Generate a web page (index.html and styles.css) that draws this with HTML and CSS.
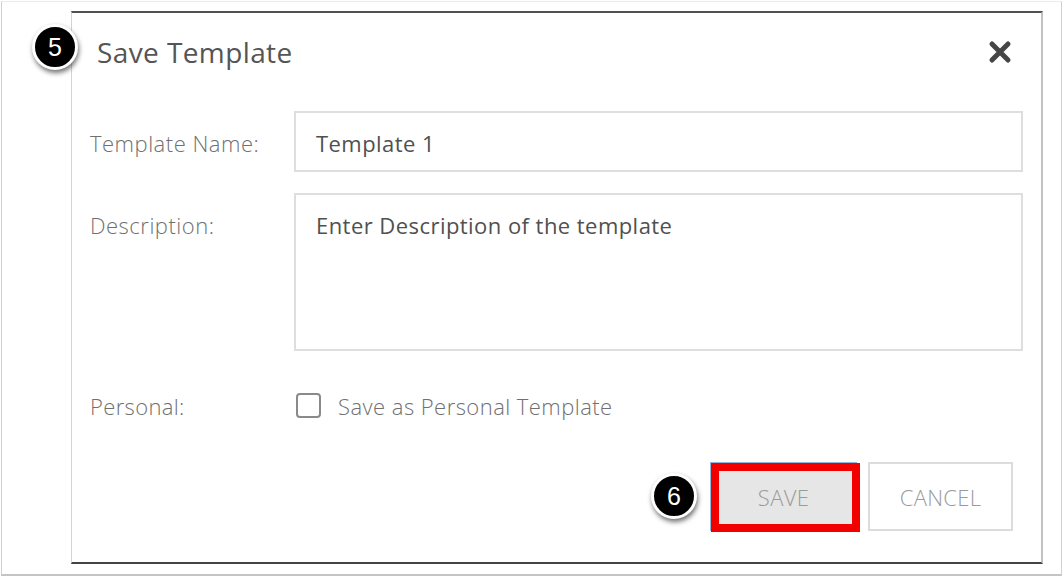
FILE: index.html
```html
<!DOCTYPE html>
<html>
<head>
<meta charset="utf-8">
<link rel="stylesheet" href="styles.css">
</head>
<body>
<div class="frame">
  <span class="badge badge-5">5</span>
  <div class="dialog">
    <div class="header">
      <h1 class="title">Save Template</h1>
      <svg class="close" width="24" height="24" viewBox="0 0 24 24"><path d="M4 4 L20 20 M20 4 L4 20" stroke="#464646" stroke-width="5" stroke-linecap="round"/></svg>
    </div>
    <div class="form">
      <div class="label">Template Name:</div>
      <div class="field input">Template 1</div>
      <div class="label">Description:</div>
      <div class="field textarea">Enter Description of the template</div>
      <div class="label label-personal">Personal:</div>
      <div class="check-row"><span class="checkbox"></span><span class="check-text">Save as Personal Template</span></div>
    </div>
    <div class="buttons">
      <span class="badge badge-6">6</span>
      <div class="btn save">SAVE</div>
      <div class="btn cancel">CANCEL</div>
    </div>
  </div>
</div>
</body>
</html>
```
FILE: styles.css
```css
html, body {
  margin: 0;
  padding: 0;
  background: #fff;
}
body {
  font-family: "Open Sans", "Noto Sans", sans-serif;
  width: 1064px;
  height: 578px;
  overflow: hidden;
}
.frame {
  position: relative;
  box-sizing: border-box;
  margin: 1px 0 0 1px;
  width: 1061px;
  height: 575px;
  border: 1px solid #d0d0d0;
  border-top-color: #ececec;
  border-bottom: 2px solid #c4c4c4;
  padding: 9px 0 0 69px;
}
.dialog {
  box-sizing: border-box;
  width: 972px;
  height: 553px;
  border-top: 2px solid #505050;
  border-bottom: 2px solid #444;
  border-left: 1px solid #d4d4d4;
  border-right: 2px solid #c2c2c2;
  display: flex;
  flex-direction: column;
}
.header {
  height: 78px;
  display: flex;
  align-items: center;
  justify-content: space-between;
  padding: 0 29px 0 25px;
}
.title {
  margin: 0;
  font-size: 28px;
  font-weight: 400;
  color: #555;
  letter-spacing: 0.4px;
}
.close {
  display: block;
}
.form {
  margin-top: 20px;
  display: grid;
  grid-template-columns: 204px 1fr;
  row-gap: 21px;
  padding: 0 18px 0 18px;
}
.label {
  font-size: 22px;
  font-weight: 300;
  color: #707070;
  line-height: 30px;
  padding-top: 17px;
  letter-spacing: 0.5px;
}
.field {
  box-sizing: border-box;
  border: 2px solid #dedede;
  font-size: 22px;
  color: #505050;
  line-height: 30px;
  padding: 15px 20px 0 20px;
  letter-spacing: 0.45px;
}
.input {
  height: 61px;
}
.textarea {
  height: 158px;
}
.label-personal {
  padding-top: 19px;
  letter-spacing: 0.35px;
}
.check-row {
  display: flex;
  align-items: center;
  padding-top: 18px;
  padding-left: 2px;
}
.checkbox {
  box-sizing: border-box;
  width: 25px;
  height: 25px;
  border: 2px solid #8a8a8a;
  border-radius: 4px;
}
.check-text {
  margin-left: 17px;
  font-size: 22px;
  font-weight: 300;
  color: #707070;
  line-height: 30px;
  letter-spacing: 0.45px;
}
.buttons {
  margin-top: 41px;
  display: flex;
  justify-content: flex-end;
  align-items: center;
  gap: 11px;
  padding-right: 28px;
  position: relative;
}
.btn {
  box-sizing: border-box;
  height: 69px;
  display: flex;
  align-items: center;
  justify-content: center;
  font-size: 22px;
  font-weight: 300;
  color: #9a9a9a;
  letter-spacing: 0.3px;
}
.save {
  position: relative;
  width: 147px;
  background: #e6e6e6;
  border: 1px solid #8fb6dc;
}
.save::after {
  content: "";
  position: absolute;
  left: 0px;
  top: 0px;
  right: -4px;
  bottom: -2px;
  border: 8px solid #f20000;
}
.cancel {
  width: 145px;
  background: #fff;
  border: 2px solid #dcdcdc;
}
.badge {
  position: absolute;
  box-sizing: border-box;
  width: 46px;
  height: 46px;
  border-radius: 50%;
  background: #000;
  border: 3px solid #fff;
  box-shadow: 1px 3px 5px rgba(0,0,0,0.55);
  color: #fff;
  font-family: "Liberation Sans", Arial, sans-serif;
  font-size: 25px;
  line-height: 40px;
  text-align: center;
  z-index: 2;
}
.badge-5 {
  left: 30px;
  top: 22px;
}
.badge-6 {
  left: 579px;
  top: 11px;
}
```
